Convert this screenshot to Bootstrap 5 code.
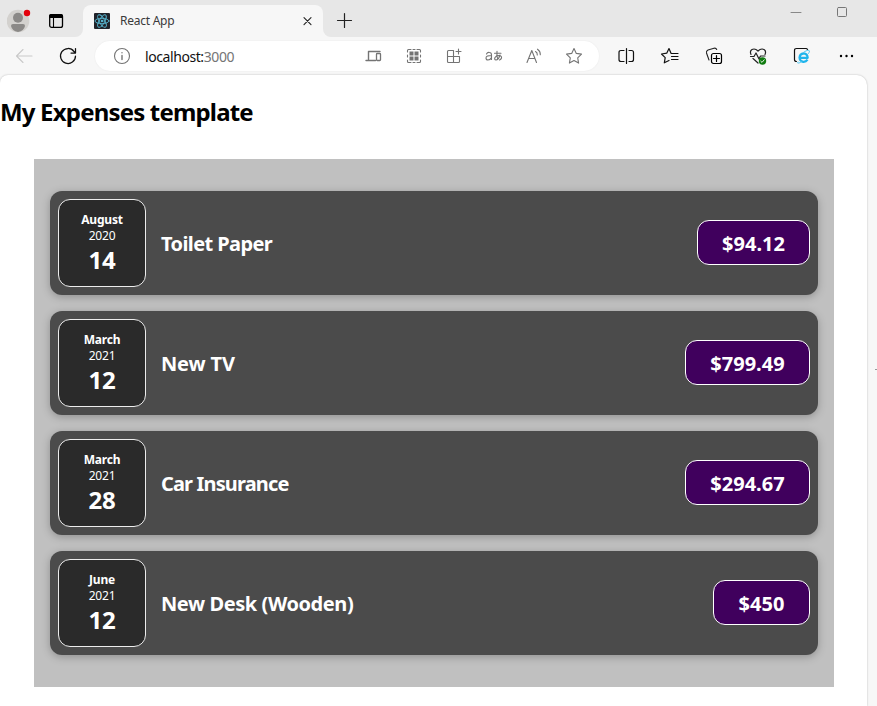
<!DOCTYPE html>
<html lang="en">
<head>
<meta charset="utf-8">
<meta name="viewport" content="width=device-width, initial-scale=1">
<title>React App</title>
<link href="https://cdn.jsdelivr.net/npm/bootstrap@5.3.0/dist/css/bootstrap.min.css" rel="stylesheet">
<style>
body{font-family:"Noto Sans","Open Sans",sans-serif;color:#000;background:#f7f7f7;height:706px;overflow:hidden}
svg{display:block;flex:none;fill:none;stroke:#222;stroke-width:1.1;stroke-linecap:round;stroke-linejoin:round}
.tabbar{height:37px}
.chrome-bg{background:#e7e7e7}
.side-left{width:83px;border-bottom-right-radius:8px;padding:4px 0 0 7px}
.side-right{border-bottom-left-radius:8px}
.tab-slot{width:240px;padding-top:5px}
.tab-item{height:32px;background:#f7f7f7;border-radius:8px 8px 0 0;padding:0 8px 0 11px}
.tab-title{font-size:12px;color:#3a3a3a;margin-left:10px;letter-spacing:-.25px}
.toolbar{height:38px;padding-left:2px}
.cell{width:44px;height:38px;display:flex;align-items:center;justify-content:center}
.address{width:504px;height:30px;background:#fff;border-radius:15px;margin-left:5px;margin-right:5px;padding:0 5px 0 17px;box-shadow:0 0 2px #0001}
.address .cell{width:40px}
.address svg{stroke:#747474}
.url{font-size:14px;color:#111;margin-left:13px;letter-spacing:-.42px}
.url span{color:#757575}
.viewport-page{width:867px;height:631px;background:#fff;border-radius:8px 10px 0 0;box-shadow:0 0 2px #0004}
.page-title{font-size:24px;font-weight:700;line-height:32px;padding-top:21px;margin:0 0 31px;letter-spacing:-.82px}
.expenses{width:800px;height:528px;background:#c0c0c0;margin-left:34px;padding:32px 16px}
.expense{height:104px;background:#4b4b4b;border-radius:12px;padding:8px;box-shadow:0 2px 8px rgba(0,0,0,.25);color:#fff}
.date-box{width:88px;height:88px;background:#2a2a2a;border:1px solid #ececec;border-radius:12px;font-size:12px;line-height:16px;padding-top:12px;letter-spacing:-.2px}
.date-day{font-size:24px;line-height:32px;font-weight:700;letter-spacing:-.3px}
.expense-name{font-size:20px;font-weight:700;margin:2px 0 0 15px;letter-spacing:-.6px}
.expense-name.tight{letter-spacing:-.85px}
.expense-name.loose{letter-spacing:-.42px}
.expense-name.wide{letter-spacing:-.15px}
.price{height:45px;background:#40005d;border:1px solid #fff;border-radius:12px;font-size:20px;font-weight:700;margin-top:-1px;padding-top:2px}
.w-97{width:97px}.w-113{width:113px}.w-125{width:125px}
.edge-tick{left:875px;top:369px;width:2px;height:1px;background:#999}
</style>
<script src="https://cdn.jsdelivr.net/npm/bootstrap@5.3.0/dist/js/bootstrap.bundle.min.js"></script>
</head>
<body>
<header>
<div class="tabbar d-flex">
  <div class="side-left chrome-bg d-flex">
    <svg width="26" height="30" viewBox="0 0 26 30"><g stroke="none"><circle cx="11" cy="17" r="11.3" fill="#d3d1ce"/><circle cx="11" cy="13.700" r="5" fill="#8b8987"/><path fill="#8b8987" d="M4 22q0-2 2-2h10q2 0 2 2-1 5-7 6-6-1-7-6z"/><circle cx="20" cy="9" r="3.200" fill="#e3000b"/></g></svg>
    <svg class="ms-3" width="16" height="32" viewBox="0 0 16 32"><rect x=".7" y="10.600" width="12.800" height="12.800" rx="2" stroke="#000" stroke-width="1.300"/><path d="M0 14v-2q0-2 2-2h10q2 0 2 2v2z" fill="#000" stroke="none"/><path d="M4.500 13v10" stroke="#000"/></svg>
  </div>
  <div class="tab-slot chrome-bg">
    <div class="tab-item d-flex align-items-center">
      <svg width="16" height="16" viewBox="0 0 16 16"><rect width="16" height="16" rx="1" fill="#20232a" stroke="none"/><g stroke="#58b8d2" stroke-width=".9"><ellipse cx="8" cy="8" rx="7" ry="2.700"/><ellipse cx="8" cy="8" rx="7" ry="2.700" transform="rotate(60 8 8)"/><ellipse cx="8" cy="8" rx="7" ry="2.700" transform="rotate(120 8 8)"/><circle cx="8" cy="8" r=".9" fill="#61dafb"/></g></svg>
      <span class="tab-title">React App</span>
      <svg class="ms-auto" width="14" height="14" viewBox="0 0 14 14"><path d="M3 3.700l7 7m0-7l-7 7"/></svg>
    </div>
  </div>
  <div class="side-right chrome-bg flex-fill d-flex">
    <svg width="40" height="37" viewBox="0 0 40 37"><path d="M14.500 20.500h14M21.500 13.500v14" stroke-width="1.200"/></svg>
    <svg class="ms-auto" width="100" height="37" viewBox="0 0 100 37"><path d="M14 12.500h10" stroke="#888" stroke-width="1"/><rect x="60.500" y="7.500" width="9" height="9" rx="1" stroke="#777" stroke-width="1"/></svg>
  </div>
</div>
<div class="toolbar d-flex align-items-center">
  <div class="cell"><svg width="20" height="20" viewBox="0 0 20 20"><path d="M18 10H2.500M9 3.500L2.500 10 9 16.500" stroke="#c9c9c9"/></svg></div>
  <div class="cell"><svg width="20" height="20" viewBox="0 0 20 20"><path d="M17.500 10A7.500 7.500 0 1 1 16 5.500L17.300 7M17.500 2.500V7H13" stroke="#111" stroke-width="1.250"/></svg></div>
  <div class="address d-flex align-items-center">
    <svg width="20" height="20" viewBox="0 0 20 20"><circle cx="10" cy="10" r="7.500"/><path d="M10 9.500v4M10 6.700v.1" stroke-width="1.400"/></svg>
    <div class="url">localhost:<span>3000</span></div>
    <div class="d-flex ms-auto">
      <div class="cell"><svg width="20" height="20" viewBox="0 0 20 20"><path d="M16 5.500H4.500v8M2 14.500h9.500" stroke-width="1.400"/><rect x="12.500" y="7.500" width="4" height="7" rx=".8" stroke-width="1.300"/></svg></div>
      <div class="cell"><svg width="20" height="20" viewBox="0 0 20 20"><path d="M3.500 6V4.500q0-1 1-1H7M9 3.500h2M13 3.500h2.500q1 0 1 1V6M3.500 9v2M16.500 9v2M3.500 14v1.500q0 1 1 1H7M9 16.500h2M13 16.500h2.500q1 0 1-1V14"/><path d="M5.500 5.500h4v4h-4zM10.500 5.500h4v4h-4zM5.500 10.500h4v4h-4zM10.500 10.500h4v4h-4z" fill="#747474" stroke="none"/></svg></div>
      <div class="cell"><svg width="20" height="20" viewBox="0 0 20 20"><path d="M9.500 4.500H4.500q-1 0-1 1v10q0 1 1 1h10q1 0 1-1v-5h-12M9.500 4.500v12M14.500 3v5M12 5.500h5"/></svg></div>
      <div class="cell"><svg width="20" height="20" viewBox="0 0 20 20"><path d="M2.500 8q1-2 3-1.500 2 0 2 2.500v4.500M7.500 9.500C4 9.500 2 10 2 12q0 2 2 2 2.500 0 3.500-2.500M10.500 7.200h6.500M13 5.200q-.5 5 .8 8M16 9q-1.500 5-4 5-2-.3-1-2.500 1-2 4-2 3 .3 2.500 2.500-.5 1.500-2 2"/></svg></div>
      <div class="cell"><svg width="20" height="20" viewBox="0 0 20 20"><path d="M3 16.500L7.800 4.500 12.500 16.500M4.500 12.500h6.500M11.500 5.500q2 1 1.800 3.500M13.500 3.200q3 2 2.800 5.500"/></svg></div>
      <div class="cell"><svg width="20" height="20" viewBox="0 0 20 20"><path d="M10 2.500l2.300 4.900 5.200.7-3.800 3.700.9 5.300-4.600-2.500-4.600 2.500.9-5.300L2.500 8.100l5.200-.7z"/></svg></div>
    </div>
  </div>
  <div class="cell"><svg width="20" height="20" viewBox="0 0 20 20"><path d="M8 4.500H5q-2 0-2 2v7q0 2 2 2h3M13 4.500h2.500q2 0 2 2v7q0 2-2 2H13M10.500 2.500v15" stroke="#111" stroke-width="1.200"/></svg></div>
  <div class="cell"><svg width="20" height="20" viewBox="0 0 20 20"><path d="M13 7.500l-2-.2L9 2.500 6.700 7.200 1.500 8l3.700 3.600-.9 5.200L9 14.500M12.500 7.500H18M11.500 10.500H18M11.500 13.500H18" stroke="#111" stroke-width="1.200"/></svg></div>
  <div class="cell"><svg width="20" height="20" viewBox="0 0 20 20"><path d="M5 14l-2.500-7q-.5-2 1.500-3l6-1.800q2-.5 2.700 1.300" stroke="#222"/><rect x="7.500" y="7.500" width="10" height="10" rx="2" stroke="#000" stroke-width="1.200"/><path d="M12.500 9.500v6M9.500 12.500h6" stroke="#000" stroke-width="1.200"/></svg></div>
  <div class="cell"><svg width="20" height="20" viewBox="0 0 20 20"><path d="M3 8.500Q1.500 5 4 3.500q3-1.500 6 1.500 3-3 6-1.500 2.500 1.500 1 5M2.500 10.500H6l2-3.500 3 6 1.500-3H17M5 12.500l5 4.500" stroke="#222" stroke-width="1.200"/><circle cx="14.500" cy="15" r="3.700" fill="#107c10" stroke="none"/><path d="M12.800 15.200l1.200 1.200 2.200-2.600" stroke="#fff" stroke-width=".9"/></svg></div>
  <div class="cell"><svg width="20" height="20" viewBox="0 0 20 20"><path d="M15.500 3.500q-.5-1-1.500-1H4.500q-2 0-2 2v9q0 2 2 2" stroke="#111" stroke-width="1.200"/><path d="M15.500 13.700q-1.500 2.300-4.300 2.100-3.500-.6-3.700-4.300.4-3.700 4-4.100 4 .2 4.200 4.400H8.500" stroke="#1eb4ec" stroke-width="2.200" stroke-linecap="butt"/><path d="M6 16q-1.500 1.500 1 1 2-.6 3-1.500M12 6q5-3 5.500-1 0 1-1 2.500" stroke="#47c4f2" stroke-width=".9"/></svg></div>
  <div class="cell"><svg width="20" height="20" viewBox="0 0 20 20"><g fill="#000" stroke="none"><circle cx="5" cy="10" r="1.200"/><circle cx="10.500" cy="10" r="1.200"/><circle cx="16" cy="10" r="1.200"/></g></svg></div>
</div>
</header>
<main class="viewport-page">
  <h1 class="page-title">My Expenses template</h1>
  <section class="expenses d-flex flex-column gap-3">
    <article class="expense d-flex align-items-center">
      <div class="date-box text-center"><div class="fw-bold">August</div><div>2020</div><div class="date-day">14</div></div>
      <h2 class="expense-name">Toilet Paper</h2>
      <div class="price w-113 ms-auto d-flex align-items-center justify-content-center">$94.12</div>
    </article>
    <article class="expense d-flex align-items-center">
      <div class="date-box text-center"><div class="fw-bold">March</div><div>2021</div><div class="date-day">12</div></div>
      <h2 class="expense-name wide">New TV</h2>
      <div class="price w-125 ms-auto d-flex align-items-center justify-content-center">$799.49</div>
    </article>
    <article class="expense d-flex align-items-center">
      <div class="date-box text-center"><div class="fw-bold">March</div><div>2021</div><div class="date-day">28</div></div>
      <h2 class="expense-name tight">Car Insurance</h2>
      <div class="price w-125 ms-auto d-flex align-items-center justify-content-center">$294.67</div>
    </article>
    <article class="expense d-flex align-items-center">
      <div class="date-box text-center"><div class="fw-bold">June</div><div>2021</div><div class="date-day">12</div></div>
      <h2 class="expense-name loose">New Desk (Wooden)</h2>
      <div class="price w-97 ms-auto d-flex align-items-center justify-content-center">$450</div>
    </article>
  </section>
</main>
<div class="edge-tick position-absolute"></div>
</body>
</html>
